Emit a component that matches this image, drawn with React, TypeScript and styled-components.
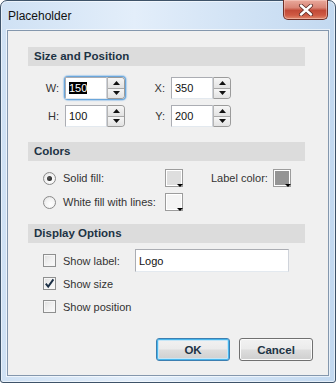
import React from "react";
import styled, { createGlobalStyle, css } from "styled-components";

const GlobalStyle = createGlobalStyle`
  html, body {
    margin: 0;
    padding: 0;
    background: #ffffff;
  }
  body {
    font-family: "Liberation Sans", Arial, sans-serif;
    font-size: 11px;
    color: #222;
  }
  * {
    box-sizing: border-box;
  }
`;

const Dialog: React.FC = () => {
  return (
    <Window>
      <TitleBar>
        <Title>Placeholder</Title>
        <CloseButton aria-label="Close">
          <svg width="16" height="12" viewBox="0 0 16 12">
            <path d="M3 1.5 L13 10.5 M13 1.5 L3 10.5" stroke="#5b2a24" strokeWidth="4" strokeLinecap="round" />
            <path d="M3 1.5 L13 10.5 M13 1.5 L3 10.5" stroke="#ffffff" strokeWidth="2.4" strokeLinecap="round" />
          </svg>
        </CloseButton>
      </TitleBar>

      <Body>
        <Section>
          <SectionHeader>Size and Position</SectionHeader>
          <SizeGrid>
            <FieldLabel>W:</FieldLabel>
            <Spinner value="150" focused />
            <FieldLabel>X:</FieldLabel>
            <Spinner value="350" />
            <FieldLabel>H:</FieldLabel>
            <Spinner value="100" />
            <FieldLabel>Y:</FieldLabel>
            <Spinner value="200" />
          </SizeGrid>
        </Section>

        <Section $gap={15}>
          <SectionHeader>Colors</SectionHeader>
          <ColorGrid>
            <OptionLabel>
              <Radio $checked />
              <span>Solid fill:</span>
            </OptionLabel>
            <Swatch $fill="#dedede" />
            <SideLabel>Label color:</SideLabel>
            <Swatch $fill="#959595" />
            <OptionLabel>
              <Radio />
              <span>White fill with lines:</span>
            </OptionLabel>
            <Swatch $fill="#f4f4f4" />
          </ColorGrid>
        </Section>

        <Section $gap={13}>
          <SectionHeader>Display Options</SectionHeader>
          <OptionList>
            <OptionRow>
              <OptionLabel $width={92}>
                <Checkbox />
                <span>Show label:</span>
              </OptionLabel>
              <TextBox defaultValue="Logo" />
            </OptionRow>
            <OptionRow>
              <OptionLabel>
                <Checkbox $checked />
                <span>Show size</span>
              </OptionLabel>
            </OptionRow>
            <OptionRow>
              <OptionLabel>
                <Checkbox />
                <span>Show position</span>
              </OptionLabel>
            </OptionRow>
          </OptionList>
        </Section>

        <Footer>
          <PushButton $default>OK</PushButton>
          <PushButton>Cancel</PushButton>
        </Footer>
      </Body>
    </Window>
  );
};

interface SpinnerProps {
  value: string;
  focused?: boolean;
}

const Spinner: React.FC<SpinnerProps> = ({ value, focused }) => (
  <SpinField $focused={focused}>
    <SpinInput>{focused ? <Selected>{value}</Selected> : value}</SpinInput>
    <SpinButtons>
      <SpinButton>
        <svg width="7" height="4" viewBox="0 0 7 4">
          <path d="M0 4 L3.5 0 L7 4 Z" fill="#111" />
        </svg>
      </SpinButton>
      <SpinButton>
        <svg width="7" height="4" viewBox="0 0 7 4">
          <path d="M0 0 L3.5 4 L7 0 Z" fill="#111" />
        </svg>
      </SpinButton>
    </SpinButtons>
  </SpinField>
);

const Checkbox: React.FC<{ $checked?: boolean }> = ({ $checked }) => (
  <CheckBox>
    {$checked && (
      <svg width="11" height="11" viewBox="0 0 11 11">
        <path d="M1.8 5.6 L4.2 8.6 L9.4 1.4" stroke="#1b2f45" strokeWidth="1.9" fill="none" />
      </svg>
    )}
  </CheckBox>
);

const Window = styled.div`
  width: 336px;
  height: 383px;
  display: flex;
  flex-direction: column;
  padding: 0 6px 6px 6px;
  border: 1px solid #3e5369;
  border-radius: 7px 7px 3px 3px;
  background: linear-gradient(to right, #cfe1f4 0%, #e3eefa 40%, #d2e3f5 70%, #c3d9f0 100%);
  box-shadow: inset 0 0 0 1px rgba(255, 255, 255, 0.55);
`;

const TitleBar = styled.div`
  height: 29px;
  display: flex;
  justify-content: space-between;
  align-items: flex-start;
  padding-left: 1px;
  padding-right: 1px;
`;

const Title = styled.div`
  font-family: "Liberation Sans", Arial, sans-serif;
  font-size: 12px;
  line-height: 12px;
  color: #111;
  margin-top: 9px;
`;

const CloseButton = styled.div`
  width: 45px;
  height: 20px;
  margin-top: -1px;
  display: flex;
  align-items: center;
  justify-content: center;
  border: 1px solid #6e2f27;
  border-top: none;
  border-radius: 0 0 5px 5px;
  background: linear-gradient(to bottom, #e9a99c 0%, #d98576 40%, #c24a37 55%, #cf5a44 80%, #e08a6e 100%);
  box-shadow: inset 0 0 0 1px rgba(255, 220, 210, 0.45);
`;

const Body = styled.div`
  flex: 1;
  display: flex;
  flex-direction: column;
  background: #f0f0f0;
  border: 1px solid #8497ad;
  box-shadow: 0 0 0 1px rgba(255, 255, 255, 0.6);
  padding: 16px 0 14px 0;
`;

const Section = styled.section<{ $gap?: number }>`
  margin: ${(p) => p.$gap ?? 0}px 23px 0 20px;
`;

const SectionHeader = styled.div`
  height: 19px;
  line-height: 19px;
  padding-left: 6px;
  background: #dcdcdc;
  font-weight: bold;
  font-size: 11.5px;
  color: #1d3344;
`;

const SizeGrid = styled.div`
  display: grid;
  grid-template-columns: 31px 60px 34px 60px;
  grid-auto-rows: 22px;
  column-gap: 6px;
  row-gap: 6px;
  margin-top: 11px;
`;

const FieldLabel = styled.div`
  display: flex;
  align-items: center;
  justify-content: flex-end;
  color: #333;
`;

const SpinField = styled.div<{ $focused?: boolean }>`
  display: flex;
  height: 22px;
  border-radius: 3px;
  ${(p) =>
    p.$focused &&
    css`
      box-shadow: 0 0 0 1px #6aa6db, 0 0 1px 2px rgba(140, 190, 235, 0.6);
    `}
`;

const SpinInput = styled.div`
  width: 42px;
  display: flex;
  align-items: center;
  padding-left: 3px;
  background: #fff;
  border: 1px solid #abadb3;
  border-right-color: #cfd3da;
  border-bottom-color: #e3e9ef;
  color: #111;
`;

const Selected = styled.span`
  background: #000;
  color: #fff;
  line-height: 12px;
`;

const SpinButtons = styled.div`
  width: 18px;
  display: flex;
  flex-direction: column;
  border: 1px solid #9b9b9b;
  border-left-color: #b5b5b5;
  border-radius: 0 4px 4px 0;
  overflow: hidden;
`;

const SpinButton = styled.div`
  flex: 1;
  display: flex;
  align-items: center;
  justify-content: center;
  background: linear-gradient(to bottom, #f6f6f6, #e2e2e2);
  & + & {
    border-top: 1px solid #a8a8a8;
  }
`;

const ColorGrid = styled.div`
  display: grid;
  grid-template-columns: 122px 18px 90px 18px;
  grid-auto-rows: 18px;
  row-gap: 6px;
  margin: 8px 0 0 15px;
`;

const OptionLabel = styled.label<{ $width?: number }>`
  display: flex;
  align-items: center;
  gap: 7px;
  color: #333;
  ${(p) => p.$width && `width: ${p.$width}px; flex: none;`}
`;

const SideLabel = styled.div`
  display: flex;
  align-items: center;
  padding-left: 28px;
  color: #333;
`;

const Radio = styled.span<{ $checked?: boolean }>`
  position: relative;
  width: 13px;
  height: 13px;
  flex: none;
  border-radius: 50%;
  border: 1px solid #8a8a8a;
  background: radial-gradient(circle at 60% 65%, #ffffff 0%, #f2f2f2 55%, #d8d8d8 100%);
  ${(p) =>
    p.$checked &&
    css`
      &::after {
        content: "";
        position: absolute;
        left: 3px;
        top: 3px;
        width: 5px;
        height: 5px;
        border-radius: 50%;
        background: radial-gradient(circle at 40% 40%, #5a5a5a, #111);
      }
    `}
`;

const Swatch = styled.span<{ $fill: string }>`
  position: relative;
  width: 18px;
  height: 18px;
  border: 1px solid #9c9c9c;
  background: ${(p) => p.$fill};
  box-shadow: inset 0 0 0 1px #ffffff;
  &::after {
    content: "";
    position: absolute;
    right: -1px;
    bottom: -1px;
    border-left: 3px solid transparent;
    border-right: 3px solid transparent;
    border-top: 3px solid #000;
    background: transparent;
  }
`;

const OptionList = styled.div`
  display: flex;
  flex-direction: column;
  margin: 6px 0 0 15px;
`;

const OptionRow = styled.div`
  height: 23px;
  display: flex;
  align-items: center;
`;

const CheckBox = styled.span`
  width: 13px;
  height: 13px;
  flex: none;
  display: flex;
  align-items: center;
  justify-content: center;
  border: 1px solid #8e8f8f;
  background: linear-gradient(135deg, #dedede 0%, #f0f0f0 50%, #fbfbfb 100%);
  box-shadow: inset 0 0 0 1px #f6f6f6;
`;

const TextBox = styled.input`
  width: 154px;
  height: 23px;
  padding: 0 0 0 3px;
  border: 1px solid #abadb3;
  border-right-color: #cfd3da;
  border-bottom-color: #e3e9ef;
  background: #fff;
  font-family: "Liberation Sans", Arial, sans-serif;
  font-size: 11px;
  color: #111;
  outline: none;
`;

const Footer = styled.div`
  margin-top: auto;
  display: flex;
  justify-content: flex-end;
  gap: 9px;
  padding-right: 15px;
`;

const PushButton = styled.button<{ $default?: boolean }>`
  width: 74px;
  height: 23px;
  padding: 0;
  border: 1px solid #707070;
  border-radius: 3px;
  background: linear-gradient(to bottom, #f2f2f2 0%, #ebebeb 48%, #dddddd 52%, #cfcfcf 100%);
  box-shadow: inset 0 0 0 1px #fbfbfb;
  font-family: "Liberation Sans", Arial, sans-serif;
  font-size: 11.5px;
  font-weight: bold;
  color: #1d3344;
  ${(p) =>
    p.$default &&
    css`
      border-color: #3c7fb1;
      box-shadow: inset 0 0 0 1px #48b6ec, inset 0 0 0 2px #c5e6f7;
    `}
`;

const App: React.FC = () => (
  <>
    <GlobalStyle />
    <Dialog />
  </>
);

export default App;
